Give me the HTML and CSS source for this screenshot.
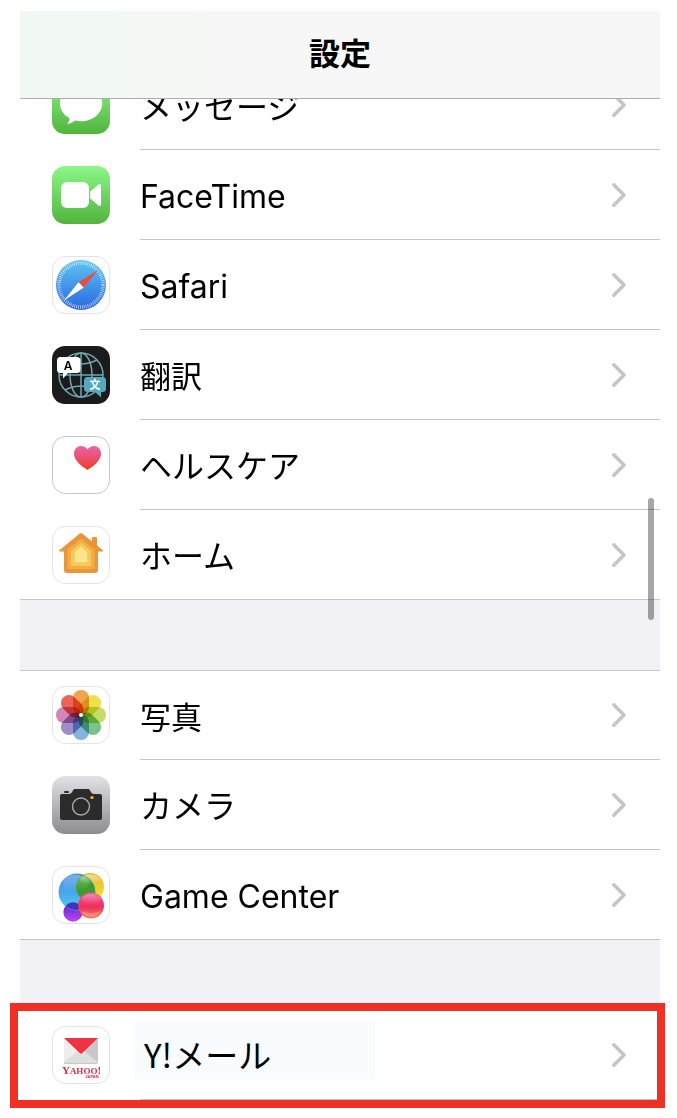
FILE: index.html
```html
<!DOCTYPE html>
<html lang="ja">
<head>
  <meta charset="UTF-8">
  <meta name="viewport" content="width=device-width, initial-scale=1.0">
  <title>設定</title>
  <link rel="stylesheet" href="styles.css">
</head>
<body>
  <!-- Shared gradients and shapes -->
  <svg class="defs" width="0" height="0" aria-hidden="true">
    <defs>
      <linearGradient id="green" x1="0" y1="0" x2="0" y2="1"><stop offset="0" stop-color="#8bf788"/><stop offset="1" stop-color="#52b43d"/></linearGradient>
      <linearGradient id="blue" x1="0" y1="0" x2="0" y2="1"><stop offset="0" stop-color="#5cc5f4"/><stop offset="1" stop-color="#2c67e0"/></linearGradient>
      <linearGradient id="heart" x1="0" y1="0" x2="0" y2="1"><stop offset="0" stop-color="#ec62ae"/><stop offset="1" stop-color="#ee3d24"/></linearGradient>
      <linearGradient id="silver" x1="0" y1="0" x2="0" y2="1"><stop offset="0" stop-color="#e2e1e6"/><stop offset="1" stop-color="#8c8b90"/></linearGradient>
      <linearGradient id="bubble-blue" x1="0" y1="0" x2="0" y2="1"><stop offset="0" stop-color="#4a8fe0"/><stop offset="0.5" stop-color="#45a8ea"/><stop offset="1" stop-color="#5cc8f8"/></linearGradient>
      <linearGradient id="bubble-yellow" x1="0" y1="0" x2="0" y2="1"><stop offset="0" stop-color="#e2b82c"/><stop offset="1" stop-color="#f6e52e"/></linearGradient>
      <linearGradient id="bubble-red" x1="0" y1="0" x2="0" y2="1"><stop offset="0" stop-color="#f4589a"/><stop offset="0.55" stop-color="#ee2f5f"/><stop offset="1" stop-color="#fb7a5c"/></linearGradient>
      <linearGradient id="bubble-purple" x1="0" y1="0" x2="0" y2="1"><stop offset="0" stop-color="#5628b8"/><stop offset="1" stop-color="#c044fa"/></linearGradient>
      <linearGradient id="shine" x1="0" y1="0" x2="0" y2="1"><stop offset="0" stop-color="#fff" stop-opacity="0.7"/><stop offset="1" stop-color="#fff" stop-opacity="0"/></linearGradient>
      <clipPath id="clip-blue"><circle cx="25" cy="26" r="18"/></clipPath>
      <symbol id="chevron" viewBox="0 0 16 26"><path d="M2.8 2.8 13 13 2.8 23.2" fill="none" stroke="#c5c5c7" stroke-width="3.6" stroke-linecap="round" stroke-linejoin="round"/></symbol>
    </defs>
  </svg>

  <div class="screen">
    <header class="navbar">
      <h1>設定</h1>
    </header>

    <main class="list">
      <!-- Apple apps -->
      <nav class="group group-first">
        <a class="row" href="#messages">
          <svg class="icon" viewBox="0 0 58 58" aria-hidden="true">
            <rect width="58" height="58" rx="13" fill="url(#green)"/>
            <path d="M29 9C17.200 9 8 17 8 27.300c0 6.500 3.700 11.700 9.500 14.900-.1 2.400-.9 4.200-2.300 5.700 3.100-.2 5.700-1.500 7.800-3.300 2 .5 4 .7 6 .7 11.800 0 21.300-8 21.300-18S40.800 9 29 9Z" fill="#fff"/>
          </svg>
          <span class="body"><span class="label kana">メッセージ</span><svg class="chevron" aria-hidden="true"><use href="#chevron"/></svg></span>
        </a>
        <a class="row" href="#facetime">
          <svg class="icon" viewBox="0 0 58 58" aria-hidden="true">
            <rect width="58" height="58" rx="13" fill="url(#green)"/>
            <rect x="9" y="16" width="28" height="26" rx="6" fill="#fff"/>
            <path d="M38.200 25.500 46.500 18.600Q49 17 49 20v18q0 3-2.500 1.400l-8.300-6.900Z" fill="#fff"/>
          </svg>
          <span class="body"><span class="label latin">FaceTime</span><svg class="chevron" aria-hidden="true"><use href="#chevron"/></svg></span>
        </a>
        <a class="row" href="#safari">
          <svg class="icon" viewBox="0 0 58 58" aria-hidden="true">
            <rect x="0.500" y="0.500" width="57" height="57" rx="13" fill="#fff" stroke="#e3e3e5"/>
            <circle cx="29" cy="29" r="25" fill="url(#blue)"/>
            <circle cx="29" cy="29" r="22" fill="none" stroke="#fff" stroke-opacity="0.75" stroke-width="3.500" stroke-dasharray="0.700 1.220"/>
            <path d="M46 14 26.500 26.200 31.700 31.400Z" fill="#ec4d3d"/>
            <path d="M12 44.500 26.500 26.200 31.700 31.400Z" fill="#fff"/>
          </svg>
          <span class="body"><span class="label latin">Safari</span><svg class="chevron" aria-hidden="true"><use href="#chevron"/></svg></span>
        </a>
        <a class="row" href="#translate">
          <svg class="icon" viewBox="0 0 58 58" aria-hidden="true">
            <rect width="58" height="58" rx="13" fill="#1b1b1b"/>
            <g fill="none" stroke="#70a5b0" stroke-width="1.500">
              <circle cx="29" cy="29" r="22"/>
              <ellipse cx="29" cy="29" rx="11" ry="22"/>
              <path d="M29 7v44M7 29h44M13 14q16 8 32 0M13 44q16-8 32 0"/>
            </g>
            <path d="M8.500 11H25q3.500 0 3.500 3.500v9Q28.500 27 25 27h-9l-5 5.500V27H8.500Q5 27 5 23.500v-9Q5 11 8.500 11Z" fill="#fff"/>
            <path d="M35.500 31h15q3.500 0 3.500 3.500v8q0 3.500-3.500 3.500H49v5.500L43 46h-7.500q-3.500 0-3.500-3.500v-8q0-3.500 3.500-3.500Z" fill="#55a9bf"/>
            <text class="glyph-a" x="16" y="23.500" text-anchor="middle">A</text>
            <text class="glyph-bun" x="43" y="42.500" text-anchor="middle">文</text>
          </svg>
          <span class="body"><span class="label">翻訳</span><svg class="chevron" aria-hidden="true"><use href="#chevron"/></svg></span>
        </a>
        <a class="row" href="#health">
          <svg class="icon" viewBox="0 0 58 58" aria-hidden="true">
            <rect x="0.500" y="0.500" width="57" height="57" rx="13" fill="#fff" stroke="#c6c6c8"/>
            <path d="M35.500 34C30 30.500 22 25 22 17.500 22 13 25.200 10 29 10c2.800 0 5 1.300 6.500 3.600C37 11.300 39.200 10 42 10c3.800 0 7 3 7 7.500C49 25 41 30.500 35.500 34Z" fill="url(#heart)"/>
          </svg>
          <span class="body"><span class="label kana">ヘルスケア</span><svg class="chevron" aria-hidden="true"><use href="#chevron"/></svg></span>
        </a>
        <a class="row" href="#home">
          <svg class="icon" viewBox="0 0 58 58" aria-hidden="true">
            <rect x="0.500" y="0.500" width="57" height="57" rx="13" fill="#fff" stroke="#e3e3e5"/>
            <path d="M27.800 7.500q1.200-1 2.400 0L40 15.500V12q0-1 1-1h3q1 0 1 1v7.600l6 4.900q.5 1-.5 1H46V44q0 3-3 3H15q-3 0-3-3V25.500H7.500q-1 0-.5-1Z" fill="#eb943a"/>
            <path d="M29 12.500 42.500 23.500V43h-27V23.500Z" fill="#f2ad45"/>
            <path d="M29 16.500 39 25v15H19V25Z" fill="#f7c85a"/>
            <path d="M29 20.500 35.200 26v10.200H22.800V26Z" fill="#fbe58d"/>
          </svg>
          <span class="body"><span class="label kana">ホーム</span><svg class="chevron" aria-hidden="true"><use href="#chevron"/></svg></span>
        </a>
      </nav>

      <!-- Media apps -->
      <nav class="group">
        <a class="row" href="#photos">
          <svg class="icon" viewBox="0 0 58 58" aria-hidden="true">
            <rect x="0.500" y="0.500" width="57" height="57" rx="13" fill="#fff" stroke="#e3e3e5"/>
            <g class="petals">
              <rect x="21" y="4" width="16" height="25" rx="7.800" fill="#f0a54a"/>
              <rect x="21" y="4" width="16" height="25" rx="7.800" fill="#ece04c" transform="rotate(45 29 29)"/>
              <rect x="21" y="4" width="16" height="25" rx="7.800" fill="#c5dc68" transform="rotate(90 29 29)"/>
              <rect x="21" y="4" width="16" height="25" rx="7.800" fill="#79c389" transform="rotate(135 29 29)"/>
              <rect x="21" y="4" width="16" height="25" rx="7.800" fill="#83b4e0" transform="rotate(180 29 29)"/>
              <rect x="21" y="4" width="16" height="25" rx="7.800" fill="#9c8ec8" transform="rotate(225 29 29)"/>
              <rect x="21" y="4" width="16" height="25" rx="7.800" fill="#d188b4" transform="rotate(270 29 29)"/>
              <rect x="21" y="4" width="16" height="25" rx="7.800" fill="#ec6455" transform="rotate(315 29 29)"/>
            </g>
            <circle cx="29" cy="29" r="2" fill="#fff"/>
          </svg>
          <span class="body"><span class="label">写真</span><svg class="chevron" aria-hidden="true"><use href="#chevron"/></svg></span>
        </a>
        <a class="row" href="#camera">
          <svg class="icon" viewBox="0 0 58 58" aria-hidden="true">
            <rect width="58" height="58" rx="13" fill="url(#silver)"/>
            <rect x="12" y="15" width="5" height="2" rx="1" fill="#2b2b2b"/>
            <path d="M10 18h7c2 0 3-1.500 3.800-3.200.6-1.200 1.200-1.800 2.700-1.800h12c1.500 0 2.100.6 2.700 1.800C39 16.500 40 18 42 18h6q2 0 2 2v22q0 2-2 2H10q-2 0-2-2V20q0-2 2-2Z" fill="#2b2b2b"/>
            <circle cx="29" cy="30.500" r="8.500" fill="none" stroke="#a9a9ad" stroke-width="1.400"/>
            <circle cx="40" cy="21.500" r="1.600" fill="#f5c32c"/>
          </svg>
          <span class="body"><span class="label kana">カメラ</span><svg class="chevron" aria-hidden="true"><use href="#chevron"/></svg></span>
        </a>
        <a class="row" href="#game-center">
          <svg class="icon" viewBox="0 0 58 58" aria-hidden="true">
            <rect x="0.500" y="0.500" width="57" height="57" rx="13" fill="#fff" stroke="#e3e3e5"/>
            <circle cx="38" cy="21" r="14" fill="url(#bubble-yellow)"/>
            <circle cx="21" cy="46" r="9.700" fill="url(#bubble-purple)"/>
            <circle cx="25" cy="26" r="18.500" fill="url(#bubble-blue)"/>
            <circle cx="38" cy="21" r="14" fill="#3f9c2c" clip-path="url(#clip-blue)"/>
            <circle cx="21" cy="46" r="9.700" fill="#3b35bb" clip-path="url(#clip-blue)"/>
            <ellipse cx="24" cy="17" rx="13" ry="8" fill="url(#shine)" opacity="0.400"/>
            <ellipse cx="38" cy="13.500" rx="10" ry="5" fill="url(#shine)" opacity="0.700"/>
            <circle cx="39" cy="39.500" r="13" fill="url(#bubble-red)"/>
            <ellipse cx="39" cy="33" rx="9.500" ry="5" fill="url(#shine)" opacity="0.400"/>
            <path d="M29 45q10 4 20 0-3.500 6-10 6t-10-6Z" fill="#ffb090" opacity="0.500"/>
          </svg>
          <span class="body"><span class="label latin">Game Center</span><svg class="chevron" aria-hidden="true"><use href="#chevron"/></svg></span>
        </a>
      </nav>

      <!-- Highlighted app -->
      <nav class="highlight">
        <a class="row" href="#ymail">
          <svg class="icon" viewBox="0 0 58 58" aria-hidden="true">
            <rect x="0.500" y="0.500" width="57" height="57" rx="13" fill="#fff" stroke="#e3e3e5"/>
            <rect x="12" y="13" width="34" height="25" rx="1" fill="#c9c9c9"/>
            <rect x="12" y="12" width="34" height="24.500" rx="1" fill="#ededed"/>
            <path d="M46 12.500V36L29 25Z" fill="#c8c8c8"/>
            <path d="M12 36.500 27 24q2-1.500 4 0l15 12.500Z" fill="#dedede"/>
            <path d="M12 12h34L30 27.300q-1 .9-2 0Z" fill="#ed3440"/>
            <text class="brand" x="29.500" y="48" text-anchor="middle"><tspan class="brand-cap">Y</tspan>AHOO<tspan class="brand-cap">!</tspan></text>
            <text class="brand-sub" x="40" y="52" text-anchor="middle">JAPAN</text>
          </svg>
          <span class="body"><span class="label marked">Y!メール</span><svg class="chevron" aria-hidden="true"><use href="#chevron"/></svg></span>
        </a>
      </nav>
    </main>

    <div class="scroll-thumb"></div>
  </div>
</body>
</html>
```
FILE: styles.css
```css
/* General Styles */
* {
  box-sizing: border-box;
}

body {
  margin: 0;
  background: #fff;
  color: #000;
  font-family: "Noto Sans CJK JP", sans-serif;
}

.defs {
  position: absolute;
}

.screen {
  position: relative;
  margin: 11px 17px 0 20px;
}

/* Title Bar */
.navbar {
  position: relative;
  z-index: 1;
  display: flex;
  align-items: center;
  justify-content: center;
  height: 88px;
  padding-bottom: 5px;
  border-bottom: 1px solid #adadad;
  background: linear-gradient(90deg, #f0f8f1, #f2f9f2 14%, #f7f7f7 32%);
}

.navbar h1 {
  margin: 0;
  font-size: 31px;
  line-height: 44px;
  font-weight: 700;
}

/* Settings List */
.list {
  background: #f2f1f6;
}

.group {
  margin-top: 70px;
  background: #fff;
  border-top: 1px solid #c6c6c8;
  border-bottom: 1px solid #c6c6c8;
}

/* first group is scrolled under the title bar */
.group-first {
  margin-top: -39px;
}

.row {
  display: flex;
  align-items: center;
  gap: 30px;
  height: 90px;
  padding-left: 32px;
  color: inherit;
  text-decoration: none;
}

.group .row:first-child,
.group .row:last-child {
  height: 89px;
}

.icon {
  flex: none;
  width: 58px;
  height: 58px;
}

.row:first-child .icon {
  margin-bottom: 1px;
}

.body {
  flex: 1;
  align-self: stretch;
  display: flex;
  align-items: center;
  justify-content: space-between;
  padding-right: 33px;
  border-bottom: 1px solid #c6c6c8;
}

.group .row:last-child .body {
  border-bottom: none;
}

.label {
  font-size: 31px;
  line-height: 57px;
}

.kana {
  font-size: 32px;
}

.latin {
  padding-top: 4px;
  font-family: Inter, sans-serif;
  font-size: 32px;
}

.chevron {
  flex: none;
  width: 16px;
  height: 26px;
}

/* Highlighted Row */
.highlight {
  margin: 63px -5px 0 -10px;
  border: 8px solid #ee3124;
  background: #fff;
}

.highlight .row {
  height: 89px;
  padding-left: 34px;
}

.highlight .body {
  padding-right: 30px;
}

.marked {
  align-self: flex-start;
  width: 240px;
  margin: 11px 0 0 -5px;
  padding: 8px 0 0 9px;
  font-size: 33px;
  line-height: 49px;
  background: #f8fcff;
}

/* Scroll Indicator */
.scroll-thumb {
  position: absolute;
  top: 487px;
  right: 6px;
  width: 6px;
  height: 122px;
  border-radius: 3px;
  background: rgba(0, 0, 0, 0.35);
}

/* Icon Details */
.petals {
  isolation: isolate;
}

.petals rect {
  mix-blend-mode: multiply;
}

.glyph-a {
  font: 600 12px Inter, sans-serif;
}

.glyph-bun {
  font: 700 11px "Noto Sans CJK JP", sans-serif;
  fill: #fff;
}

.brand {
  font: 700 9px "Liberation Serif", serif;
  fill: #e8283f;
}

.brand-cap {
  font-size: 11px;
}

.brand-sub {
  font: 700 4px "Liberation Sans", sans-serif;
  fill: #e8283f;
}
```
